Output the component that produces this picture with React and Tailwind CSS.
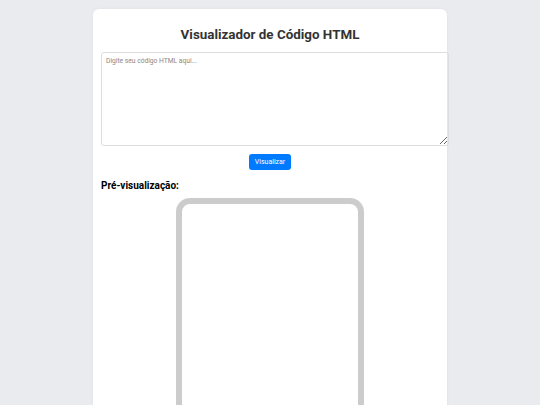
import React, { useState } from 'react';

const App = () => {
  const [code, setCode] = useState('');
  const [preview, setPreview] = useState('');

  return (
    <div className="min-h-screen bg-[#e9ebef] pt-[9px] font-['Roboto',sans-serif]">
      <div className="mx-auto w-[354px] rounded-[6px] bg-white px-[8px] pb-[8px] shadow-[0_0_3px_rgba(0,0,0,0.06)]">
        <h1 className="pt-[18px] pb-[9px] text-center text-[13.4px] leading-[16px] font-bold text-[#333]">
          Visualizador de Código HTML
        </h1>
        <textarea
          value={code}
          onChange={(e) => setCode(e.target.value)}
          placeholder="Digite seu código HTML aqui..."
          className="box-content block h-[84px] w-full resize-y rounded-[3px] border border-[#ddd] p-[4px] text-[6.7px] leading-[9px] text-[#333] placeholder:text-[#888] outline-none"
        />
        <div className="mt-[8px] flex justify-center">
          <button
            type="button"
            onClick={() => setPreview(code)}
            className="h-[16px] w-[42px] rounded-[3px] bg-[#007bff] text-[7px] leading-none text-white"
          >
            Visualizar
          </button>
        </div>
        <h2 className="mt-[9px] text-[10px] leading-[14px] font-bold text-black">Pré-visualização:</h2>
        <div className="mt-[5px] flex justify-center">
          <div
            className="h-[380px] w-[188px] rounded-[14px] border-[6px] border-[#ccc] bg-white"
            dangerouslySetInnerHTML={{ __html: preview }}
          />
        </div>
      </div>
    </div>
  );
};

export default App;
